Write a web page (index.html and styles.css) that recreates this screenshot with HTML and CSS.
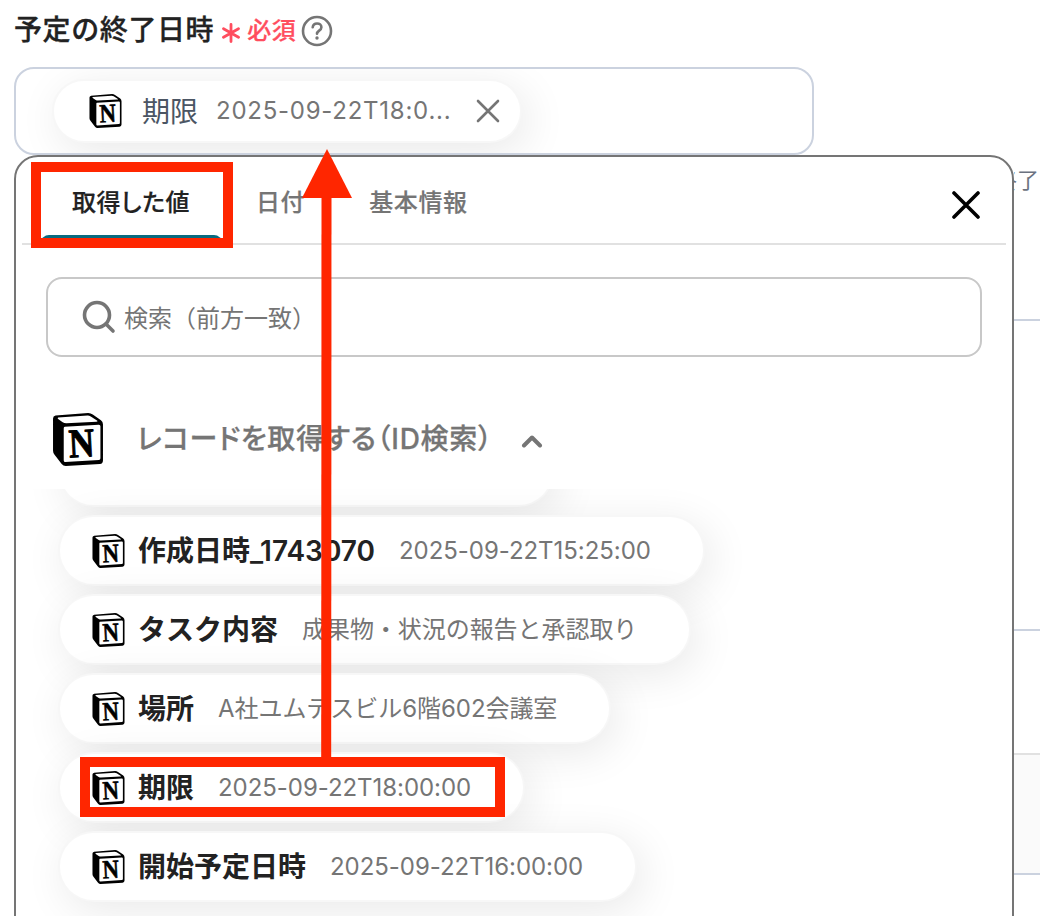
FILE: index.html
```
<!DOCTYPE html>
<html lang="ja">
<head>
    <meta charset="UTF-8">
    <meta name="viewport" content="width=device-width, initial-scale=1.0">
    <title>予定の終了日時</title>
    <link rel="stylesheet" href="styles.css">
</head>
<body>
    <svg class="sprite" aria-hidden="true">
        <symbol id="notion" viewBox="0 0 100 104">
            <path d="M6 5 L70 0 Q75 0 79 3 L95 14 Q99 17 99 22 L99 93 Q99 99 93 100 L26 104 Q21 104 18 100 L4 82 Q1 78 1 74 L1 11 Q1 6 6 5 Z" />
            <path fill="#fff" d="M11 9 L69 5 Q72 5 75 7 L88 15 Q89 17 86 17 L27 20 Q23 20 20 18 L11 12 Q9 10 11 9 Z" />
            <path fill="#fff" d="M24 27 L91 23 Q94 23 94 26 L94 89 Q94 92 91 92 L25 96 Q22 96 22 93 L22 30 Q22 27 24 27 Z" />
            <text class="notion-n" x="32" y="86" textLength="50" lengthAdjust="spacingAndGlyphs" transform="rotate(-3 58 60)">N</text>
        </symbol>
    </svg>

    <div class="field-label">
        <span class="field-name">予定の終了日時</span>
        <svg class="asterisk" viewBox="0 0 18 20"><path d="M9 1.5v17M1.5 5.7l15 8.6M16.5 5.7l-15 8.6" /></svg>
        <span class="required">必須</span>
        <svg class="help" viewBox="0 0 32 32">
            <circle cx="16" cy="16" r="14" />
            <path d="M11.7 12.3c.3-2.5 2-3.8 4.4-3.8 2.500 0 4.300 1.500 4.300 3.700 0 3.400-4.400 3.400-4.400 6.600" />
            <circle class="dot" cx="16" cy="23" r="1.700" />
        </svg>
    </div>

    <div class="value-field">
        <div class="chip value-chip">
            <svg class="icon"><use href="#notion" /></svg>
            <span class="value-name">期限</span>
            <span class="chip-value">2025-09-22T18:0...</span>
            <svg class="remove" viewBox="0 0 24 24"><path d="M2 2l20 20M22 2L2 22" /></svg>
        </div>
    </div>

    <div class="row">
        <div class="popup">
            <div class="tabs">
                <div class="tab active">取得した値</div>
                <div class="tab">日付</div>
                <div class="tab">基本情報</div>
                <svg class="close" viewBox="0 0 28 28"><path d="M2 2l24 24M26 2L2 26" /></svg>
            </div>
            <div class="search">
                <svg viewBox="0 0 34 34"><circle cx="15" cy="15" r="12.500" /><path d="M24 24l7 7" /></svg>
                <span>検索（前方一致）</span>
            </div>
            <div class="group">
                <svg class="group-icon"><use href="#notion" /></svg>
                <span class="group-name">レコードを取得する（ID検索）</span>
                <svg class="caret" viewBox="0 0 22 14"><path d="M3 11.500l8-8 8 8" /></svg>
            </div>
            <div class="list">
                <div class="chip item previous"></div>
                <div class="chip item">
                    <svg class="icon"><use href="#notion" /></svg>
                    <span class="item-name">作成日時_1743070</span>
                    <span class="chip-value">2025-09-22T15:25:00</span>
                </div>
                <div class="chip item">
                    <svg class="icon"><use href="#notion" /></svg>
                    <span class="item-name">タスク内容</span>
                    <span class="chip-value text-value">成果物・状況の報告と承認取り</span>
                </div>
                <div class="chip item">
                    <svg class="icon"><use href="#notion" /></svg>
                    <span class="item-name">場所</span>
                    <span class="chip-value text-value">A社ユムテスビル6階602会議室</span>
                </div>
                <div class="chip item">
                    <svg class="icon"><use href="#notion" /></svg>
                    <span class="item-name">期限</span>
                    <span class="chip-value">2025-09-22T18:00:00</span>
                </div>
                <div class="chip item">
                    <svg class="icon"><use href="#notion" /></svg>
                    <span class="item-name">開始予定日時</span>
                    <span class="chip-value">2025-09-22T16:00:00</span>
                </div>
            </div>
        </div>
        <div class="behind">
            <div class="behind-text"><span>終了</span></div>
            <div class="behind-box"></div>
            <div class="behind-gap"></div>
            <div class="behind-foot"></div>
        </div>
    </div>

    <svg class="annotation" viewBox="0 0 1040 916">
        <rect x="36" y="167" width="192" height="76" />
        <rect x="85" y="762" width="415" height="50" />
        <path d="M326.500 190L326.200 760" />
        <polygon points="327,149 352,198 302,198" />
    </svg>
</body>
</html>
```
FILE: styles.css
```
* {
    margin: 0;
    padding: 0;
    box-sizing: border-box;
}

:root {
    --text: #222222;
    --gray: #757575;
    --line: #cbd2df;
    --mark: #ff2600;
}

body {
    height: 916px;
    overflow: hidden;
    position: relative;
    background: #fff;
    color: var(--text);
    font-family: Inter, 'Noto Sans CJK JP', sans-serif;
    white-space: nowrap;
}

svg {
    flex: none;
    fill: none;
    stroke-linecap: round;
    stroke-linejoin: round;
}

.sprite {
    display: none;
}

.sprite path {
    stroke: none;
}

.icon,
.group-icon {
    fill: #000;
}

.notion-n {
    font-family: 'Liberation Serif', serif;
    font-size: 80px;
    font-weight: 700;
    stroke: #000;
    stroke-width: 2;
}

.field-label {
    height: 67px;
    padding: 0 0 7px 14px;
    display: flex;
    align-items: center;
}

.field-name {
    margin-bottom: 5px;
    font-size: 28px;
    font-weight: 500;
    letter-spacing: 0.6px;
    -webkit-text-stroke: 0.3px;
}

.asterisk {
    width: 18px;
    height: 20px;
    margin: 6px 7px 0 8px;
    stroke: #ff4d5e;
    stroke-width: 2.8;
}

.required {
    margin-bottom: 3px;
    font-size: 24px;
    font-weight: 500;
    letter-spacing: 0.6px;
    color: #ff4d5e;
    -webkit-text-stroke: 0.2px;
}

.help {
    width: 32px;
    height: 32px;
    margin: 2px 0 0 5px;
    stroke: var(--gray);
    stroke-width: 2.6;
}

.help .dot {
    fill: var(--gray);
    stroke: none;
}

.value-field {
    width: 800px;
    height: 88px;
    padding: 10px 36px;
    display: flex;
    margin-left: 14px;
    border: 2px solid var(--line);
    border-radius: 20px;
    overflow: hidden;
}

.chip {
    display: flex;
    align-items: center;
    background: #fff;
    border: 2px solid rgba(0, 0, 0, 0.03);
    border-radius: 36px;
    box-shadow: 6px 9px 44px rgba(0, 0, 0, 0.09);
}

.value-chip {
    width: 470px;
    height: 64px;
    padding-left: 35px;
}

.icon {
    width: 33px;
    height: 34px;
}

.value-name {
    margin: 0 18px 2px 20px;
    font-size: 28px;
    color: #4b5563;
}

.chip-value {
    margin-bottom: 1px;
    font-size: 24px;
    letter-spacing: -0.05px;
    color: var(--gray);
}

.text-value {
    margin-bottom: 4px;
}

.value-chip .chip-value {
    letter-spacing: 0.75px;
}

.remove {
    width: 24px;
    height: 24px;
    margin-left: 25px;
    stroke: var(--gray);
    stroke-width: 2.6;
}

.row {
    height: 761px;
    display: flex;
    padding-left: 14px;
}

.popup {
    flex: none;
    width: 1000px;
    height: 790px;
    border: 2px solid var(--gray);
    border-radius: 24px;
    background: #fff;
}

.tabs {
    height: 88px;
    margin: 0 6px;
    padding-left: 19px;
    display: flex;
    align-items: stretch;
    border-bottom: 2px solid #e1e1e1;
}

.tab {
    padding: 0 31px 0 33px;
    font-size: 24px;
    font-weight: 500;
    letter-spacing: 0.6px;
    line-height: 92px;
    color: var(--gray);
    font-feature-settings: 'palt';
    -webkit-text-stroke: 0.2px;
}

.tab.active {
    position: relative;
    width: 182px;
    padding: 0 0 0 31px;
    color: var(--text);
}

.tab.active::after {
    content: '';
    position: absolute;
    left: 0;
    right: 1px;
    bottom: 0;
    height: 8px;
    border-radius: 8px 8px 0 0;
    background: #096b80;
}

.close {
    width: 28px;
    height: 28px;
    margin: 34px 26px 0 auto;
    stroke: #000;
    stroke-width: 3.6;
}

.search {
    height: 80px;
    margin: 32px 30px 0;
    padding-left: 34px;
    display: flex;
    align-items: center;
    border: 2px solid #c8c8c8;
    border-radius: 16px;
    font-size: 24px;
    color: var(--gray);
}

.search svg {
    width: 34px;
    height: 34px;
    margin-right: 8px;
    stroke: var(--gray);
    stroke-width: 3.6;
}

.search span {
    margin-bottom: 1px;
}

.group {
    height: 132px;
    padding: 32px 0 0 36px;
    display: flex;
    align-items: center;
    color: var(--gray);
}

.group-icon {
    width: 52px;
    height: 53px;
}

.group-name {
    margin: 0 0 5px 33px;
    font-size: 28px;
    font-weight: 500;
    letter-spacing: 0.7px;
    font-feature-settings: 'palt';
    -webkit-text-stroke: 0.3px;
}

.caret {
    width: 22px;
    height: 14px;
    margin: 4px 0 0 28px;
    stroke: var(--gray);
    stroke-width: 4;
}

.list {
    height: 440px;
    padding-left: 42px;
    display: flex;
    flex-direction: column;
    align-items: flex-start;
    gap: 8px;
    overflow: hidden;
}

.item {
    flex: none;
    height: 71px;
    padding: 0 52px 0 32px;
}

.item.previous {
    width: 496px;
    margin-top: -53px;
}

.item-name {
    margin: 0 24px 3px 13px;
    font-size: 28px;
    font-weight: 600;
}

.behind {
    width: 26px;
    color: #6b7280;
}

.behind-text {
    height: 164px;
    display: flex;
    justify-content: flex-end;
    overflow: hidden;
    padding: 7px 1px 0 0;
    font-size: 22px;
}

.behind-box {
    height: 312px;
    border: solid var(--line);
    border-width: 2px 0;
}

.behind-gap {
    height: 122px;
}

.behind-foot {
    height: 122px;
    border-top: 2px solid #e1e1e1;
    border-bottom: 2px solid var(--line);
    background: #fafafa;
}

.annotation {
    position: absolute;
    left: 0;
    top: 0;
    width: 1040px;
    height: 916px;
    stroke: var(--mark);
    stroke-width: 10;
    stroke-linejoin: miter;
    stroke-linecap: butt;
}

.annotation polygon {
    fill: var(--mark);
    stroke: none;
}
```
